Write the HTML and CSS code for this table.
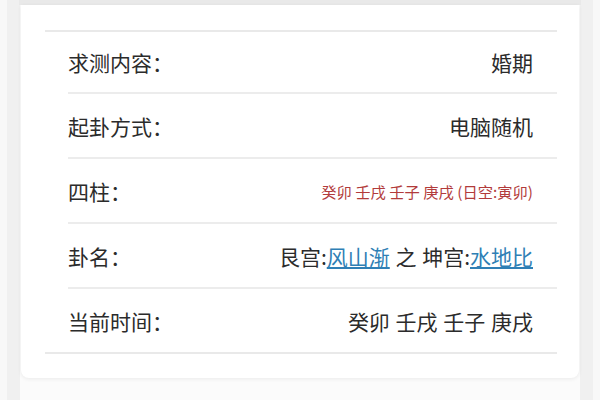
FILE: index.html
```html
<!DOCTYPE html>
<html lang="zh-CN">
<head>
<meta charset="utf-8">
<link rel="stylesheet" href="styles.css">
</head>
<body>
<div class="top-band"></div>
<div class="card">
  <div class="table">
    <div class="row first">
      <span class="label">求测内容：</span>
      <span class="value">婚期</span>
    </div>
    <div class="row">
      <span class="label">起卦方式：</span>
      <span class="value">电脑随机</span>
    </div>
    <div class="row">
      <span class="label">四柱：</span>
      <span class="value red">癸卯 壬戌 壬子 庚戌 (日空:寅卯)</span>
    </div>
    <div class="row">
      <span class="label">卦名：</span>
      <span class="value">艮宫:<a class="link" href="#">风山渐</a> 之 坤宫:<a class="link" href="#">水地比</a></span>
    </div>
    <div class="row">
      <span class="label">当前时间：</span>
      <span class="value">癸卯 壬戌 壬子 庚戌</span>
    </div>
  </div>
</div>
</body>
</html>
```
FILE: styles.css
```css
html, body {
  margin: 0;
  padding: 0;
}
body {
  width: 600px;
  height: 400px;
  overflow: hidden;
  background: linear-gradient(to right, #f8f8f8 0, #f8f8f8 7px, #f0f0f0 7px, #f0f0f0 20px, #fbfbfb 20px, #fbfbfb 580px, #f0f0f0 580px, #f0f0f0 593px, #f8f8f8 593px);
  font-family: "Noto Sans CJK SC", "Noto Sans", sans-serif;
  color: #333;
}
.top-band {
  height: 5px;
  margin: 0 19px 0 19px;
  background: #e9e9e9;
}
.card {
  margin: 0 21px;
  background: #fff;
  border-radius: 0 0 8px 8px;
  box-shadow: 0 1px 4px rgba(0,0,0,0.07);
  padding: 25px 22px 24px 24px;
}
.table {
  border-top: 2px solid #e9e9e9;
  border-bottom: 2px solid #e9e9e9;
}
.row {
  margin-left: 23px;
  height: 63px;
  display: flex;
  align-items: center;
  justify-content: space-between;
  border-top: 2px solid #ececec;
  padding-right: 24px;
}
.row.first {
  border-top: none;
  height: 60px;
}
.label {
  font-size: 21px;
  color: #2b2b2b;
}
.value {
  font-size: 21px;
  color: #2b2b2b;
  white-space: nowrap;
  word-spacing: 1px;
}
.value.red {
  font-size: 15.3px;
  color: #b23b3b;
  word-spacing: 0;
}
.link {
  color: #2f7fb5;
  text-decoration: underline;
}
```
